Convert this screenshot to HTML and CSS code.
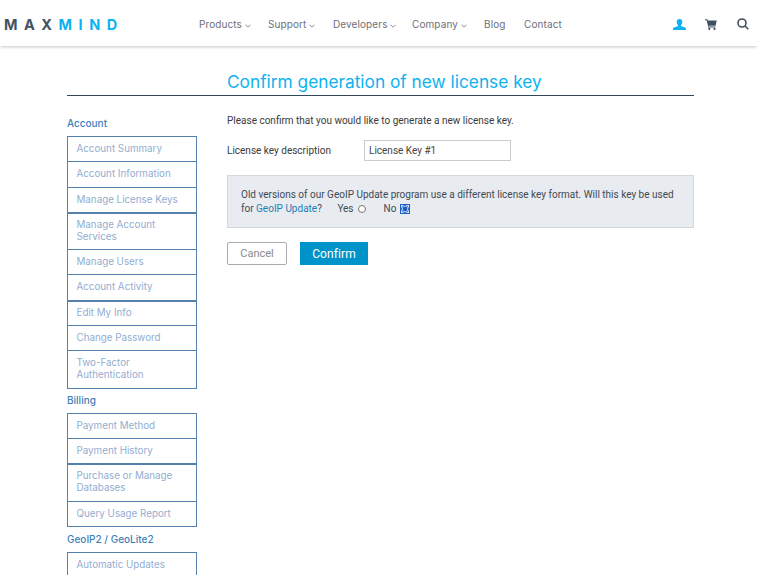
FILE: index.html
```html
<!DOCTYPE html>
<html lang="en">
<head>
<meta charset="utf-8">
<title>Confirm generation of new license key</title>
<link rel="stylesheet" href="styles.css">
</head>
<body>
<header class="topbar">
  <a class="logo"><span class="logo-dark">MAX</span><span class="logo-blue">MIND</span></a>
  <nav class="nav">
    <a class="nav-link nav-products">Products <svg class="chev" viewBox="0 0 6 4"><path d="M.5.7 3 3.2 5.5.7"/></svg></a>
    <a class="nav-link nav-support">Support <svg class="chev" viewBox="0 0 6 4"><path d="M.5.7 3 3.2 5.5.7"/></svg></a>
    <a class="nav-link nav-dev">Developers <svg class="chev" viewBox="0 0 6 4"><path d="M.5.7 3 3.2 5.5.7"/></svg></a>
    <a class="nav-link nav-company">Company <svg class="chev" viewBox="0 0 6 4"><path d="M.5.7 3 3.2 5.5.7"/></svg></a>
    <a class="nav-link nav-blog">Blog</a>
    <a class="nav-link">Contact</a>
  </nav>
  <div class="tools">
    <svg class="tool tool-user" viewBox="0 0 13 11"><path d="M6.5 0C8.3 0 9.300 1.300 9.300 3.100 9.300 4.500 8.700 5.700 7.900 6.300V7.100L12 8.600C12.700 8.900 13 9.400 13 10V11H0V10C0 9.400.3 8.900 1 8.600L5.100 7.100V6.300C4.300 5.700 3.700 4.500 3.700 3.100 3.700 1.300 4.700 0 6.500 0Z"/></svg>
    <svg class="tool tool-cart" viewBox="0 0 12 11"><path d="M0 .3H2.300L2.800 1.600H11.700L10.600 6.700H3.900L4.200 7.600H10.400V8.500H3.500L1.600 1.200H0Z"/><circle cx="4.300" cy="9.900" r="1.100"/><circle cx="9.500" cy="9.900" r="1.100"/></svg>
    <svg class="tool tool-search" viewBox="0 0 12 12"><circle cx="5" cy="5" r="4"/><path d="M8 8l3.300 3.300"/></svg>
  </div>
</header>

<main class="page">
  <h1 class="title">Confirm generation of new license key</h1>
  <div class="columns">
    <aside class="sidebar">
      <h2 class="side-head side-head-first">Account</h2>
      <ul class="side-list">
        <li class="side-item">Account Summary</li>
        <li class="side-item">Account Information</li>
        <li class="side-item">Manage License Keys</li>
        <li class="side-item side-item-thick">Manage Account Services</li>
        <li class="side-item">Manage Users</li>
        <li class="side-item">Account Activity</li>
        <li class="side-item side-item-thick">Edit My Info</li>
        <li class="side-item">Change Password</li>
        <li class="side-item">Two-Factor Authentication</li>
      </ul>
      <h2 class="side-head">Billing</h2>
      <ul class="side-list">
        <li class="side-item">Payment Method</li>
        <li class="side-item">Payment History</li>
        <li class="side-item side-item-thick">Purchase or Manage Databases</li>
        <li class="side-item">Query Usage Report</li>
      </ul>
      <h2 class="side-head side-head-last">GeoIP2 / GeoLite2</h2>
      <ul class="side-list">
        <li class="side-item">Automatic Updates</li>
      </ul>
    </aside>
    <section class="content">
      <p class="intro">Please confirm that you would like to generate a new license key.</p>
      <div class="field">
        <label class="field-label" for="desc">License key description</label>
        <input class="field-input" id="desc" type="text" value="License Key #1">
      </div>
      <div class="notice">
        Old versions of our GeoIP Update program use a different license key format. Will this key be used for <a class="notice-link">GeoIP Update</a>?
        <label class="choice choice-yes">Yes <input type="radio" name="v"></label>
        <label class="choice">No <input class="radio-focus" type="radio" name="v" checked></label>
      </div>
      <div class="actions">
        <button class="btn btn-cancel" type="button">Cancel</button>
        <button class="btn btn-confirm" type="button">Confirm</button>
      </div>
    </section>
  </div>
</main>
</body>
</html>
```
FILE: styles.css
```css
* { box-sizing: border-box; }
html, body { margin: 0; height: 575px; overflow: hidden; background: #fff; }
body { font-family: Roboto, "Liberation Sans", sans-serif; font-size: 10px; color: #333; }

.topbar {
  height: 46px;
  display: flex;
  align-items: center;
  background: #fff;
  box-shadow: 0 1px 3px rgba(0,0,0,.22);
  padding-left: 4px;
}
.logo {
  width: 195px;
  font-family: Inter, sans-serif;
  font-weight: 700;
  font-size: 14.5px;
  letter-spacing: 6.5px;
  white-space: nowrap;
  padding-top: 2px;
}
.logo-dark { color: #44525f; }
.logo-blue { color: #0db2f0; }
.nav { display: flex; align-items: center; padding-top: 2px; }
.nav-link {
  font-family: Inter, sans-serif;
  font-size: 10px;
  letter-spacing: .1px;
  color: #6f6f78;
  white-space: nowrap;
}
.nav-products { width: 69px; }
.nav-support { width: 65px; }
.nav-dev { width: 79px; }
.nav-company { width: 72px; }
.nav-blog { width: 40px; }
.chev { width: 6px; height: 4px; fill: none; stroke: #6f6f78; stroke-width: .8; vertical-align: 0; }
.tools { margin-left: auto; display: flex; align-items: center; padding-right: 8px; padding-top: 2px; }
.tool { display: block; }
.tool-user { width: 13px; height: 11px; fill: #0db2f0; }
.tool-cart { width: 12px; height: 11px; fill: #3f4f5e; margin-left: 19px; }
.tool-search { width: 12px; height: 12px; fill: none; stroke: #3f4f5e; stroke-width: 1.6; margin-left: 20px; }

.page { padding: 0 63px 0 67px; }
.title {
  margin: 24px 0 0;
  padding: 0 0 0 160px;
  height: 26px;
  font-family: Inter, sans-serif;
  font-weight: 400;
  font-size: 17.3px;
  line-height: 24px;
  color: #0db2f0;
  border-bottom: 1px solid #33475b;
  white-space: nowrap;
}
.columns { display: grid; grid-template-columns: 130px 467px; column-gap: 30px; }

.side-head {
  margin: 0;
  height: 24px;
  padding-top: 5px;
  font-family: Inter, sans-serif;
  font-size: 10px;
  font-weight: 500;
  line-height: 12px;
  color: #3c7fb8;
}
.side-head-first { height: 40px; padding-top: 21px; }
.side-head-last { height: 25px; padding-top: 6px; }
.side-list { list-style: none; margin: 0; padding: 0; border: 1px solid #5580ab; border-top-width: 0; }
.side-item {
  border-top: 1px solid #5580ab;
  padding: 6px 8px 6.3px 8.5px;
  font-family: Inter, sans-serif;
  font-size: 9.8px;
  line-height: 12px;
  color: #93add0;
}
.side-item-thick { border-top-width: 2px; padding-top: 5px; }

.content { padding-top: 18px; }
.intro { margin: 0; line-height: 13px; color: #3a3a3a; }
.field { display: flex; align-items: center; margin-top: 13px; }
.field-label { width: 137px; color: #3a3a3a; }
.field-input {
  width: 147px;
  height: 21px;
  border: 1px solid #ccc;
  padding: 0 4px;
  font: inherit;
  color: #444;
  outline: 0;
}
.notice {
  margin-top: 14px;
  height: 53px;
  padding: 12px 13px 0;
  background: #e8ebf0;
  border: 1px solid #d3d8df;
  line-height: 14px;
  color: #3f4a55;
}
.notice-link { color: #1b80b8; }
.choice { margin-left: 13px; }
.choice-yes { margin-right: 2px; }
.choice input { width: 8px; height: 8px; margin: 0 0 0 2px; vertical-align: -0.500px; accent-color: #1a5fc8; }
.choice .radio-focus { outline: 1px solid #1a5fc8; outline-offset: 0; }
.actions { display: flex; gap: 13px; margin-top: 14px; }
.btn { height: 23px; font: inherit; font-size: 11px; cursor: pointer; }
.btn-cancel { width: 60px; background: #fff; border: 1px solid #aaa; border-radius: 2px; color: #8a8a8a; }
.btn-confirm { width: 68px; background: #0093c9; border: 0; color: #fff; font-size: 12px; letter-spacing: .1px; }
```
